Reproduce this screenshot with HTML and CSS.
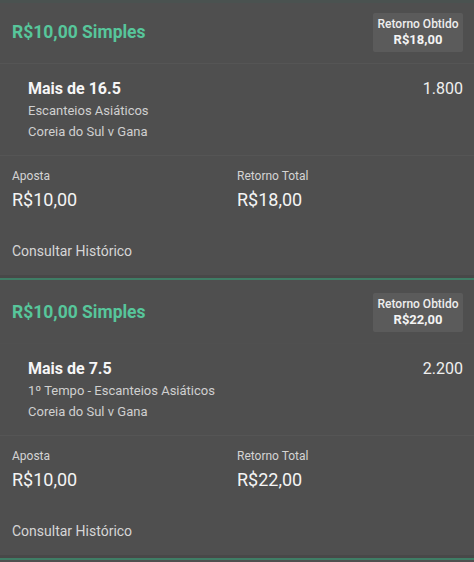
FILE: index.html
```html
<!DOCTYPE html>
<html lang="pt-BR">
<head>
<meta charset="utf-8">
<link rel="stylesheet" href="styles.css">
</head>
<body>
<div class="list">
  <section class="card first">
    <div class="card-head">
      <h2 class="bet-title">R$10,00 Simples</h2>
      <div class="badge">
        <span class="badge-label">Retorno Obtido</span>
        <span class="badge-value">R$18,00</span>
      </div>
    </div>
    <div class="selection">
      <div class="sel-row">
        <span class="sel-name">Mais de 16.5</span>
        <span class="sel-odds">1.800</span>
      </div>
      <div class="sel-market">Escanteios Asiáticos</div>
      <div class="sel-event">Coreia do Sul v Gana</div>
    </div>
    <div class="totals">
      <div class="total">
        <span class="total-label">Aposta</span>
        <span class="total-value">R$10,00</span>
      </div>
      <div class="total">
        <span class="total-label">Retorno Total</span>
        <span class="total-value">R$18,00</span>
      </div>
    </div>
    <div class="history">Consultar Histórico</div>
  </section>
  <section class="card">
    <div class="card-head plain">
      <h2 class="bet-title">R$10,00 Simples</h2>
      <div class="badge">
        <span class="badge-label">Retorno Obtido</span>
        <span class="badge-value">R$22,00</span>
      </div>
    </div>
    <div class="selection">
      <div class="sel-row">
        <span class="sel-name">Mais de 7.5</span>
        <span class="sel-odds">2.200</span>
      </div>
      <div class="sel-market">1º Tempo - Escanteios Asiáticos</div>
      <div class="sel-event">Coreia do Sul v Gana</div>
    </div>
    <div class="totals">
      <div class="total">
        <span class="total-label">Aposta</span>
        <span class="total-value">R$10,00</span>
      </div>
      <div class="total">
        <span class="total-label">Retorno Total</span>
        <span class="total-value">R$22,00</span>
      </div>
    </div>
    <div class="history">Consultar Histórico</div>
  </section>
</div>
</body>
</html>
```

FILE: styles.css
```css
html, body {
  margin: 0;
  padding: 0;
  background: #4f4f4f;
}
body {
  font-family: Roboto, "Noto Sans", "Liberation Sans", sans-serif;
  color: #f2f2f2;
  width: 474px;
  overflow: hidden;
}
.list {
  display: flex;
  flex-direction: column;
}
.card {
  background: #4f4f4f;
  border-bottom: 2px solid #3f7d65;
}
.card-head {
  height: 63px;
  display: flex;
  align-items: center;
  justify-content: space-between;
  padding: 0 11px 0 12px;
  border-bottom: 1px solid #555555;
}
.card.first .card-head {
  box-shadow: inset 0 3px 0 #4a5250;
}
.card-head.plain {
  border-bottom-color: #505050;
}
.bet-title {
  margin: 0;
  font-size: 17.5px;
  font-weight: 700;
  color: #57c69b;
  line-height: 22px;
}
.badge {
  display: flex;
  flex-direction: column;
  align-items: center;
  justify-content: center;
  width: 90px;
  height: 39px;
  margin-top: 2px;
  background: #5b5b5b;
  border-radius: 2px;
}
.badge-label {
  font-size: 12px;
  font-weight: 500;
  line-height: 15px;
  color: #eeeeee;
}
.badge-value {
  font-size: 13px;
  font-weight: 700;
  line-height: 16px;
  color: #f4f4f4;
}
.selection {
  padding: 13px 11px 13px 28px;
  border-bottom: 1px solid #555555;
}
.sel-row {
  display: flex;
  justify-content: space-between;
  align-items: center;
  height: 22px;
  margin-bottom: 1px;
}
.sel-name {
  font-size: 16px;
  font-weight: 700;
  color: #f6f6f6;
}
.sel-odds {
  font-size: 16px;
  color: #efefef;
}
.sel-market,
.sel-event {
  font-size: 13px;
  line-height: 21px;
  color: #d0d0d0;
}
.totals {
  display: grid;
  grid-template-columns: 225px 1fr;
  padding: 12px 12px 0 12px;
}
.total {
  display: flex;
  flex-direction: column;
}
.total-label {
  font-size: 12px;
  line-height: 16px;
  color: #d4d4d4;
}
.total-value {
  margin-top: 4px;
  font-size: 18px;
  line-height: 24px;
  color: #f4f4f4;
}
.history {
  margin-top: 29px;
  padding: 0 12px 14px 12px;
  font-size: 14px;
  line-height: 20px;
  color: #d6d6d6;
  border-bottom: 3px solid #484848;
}
```
